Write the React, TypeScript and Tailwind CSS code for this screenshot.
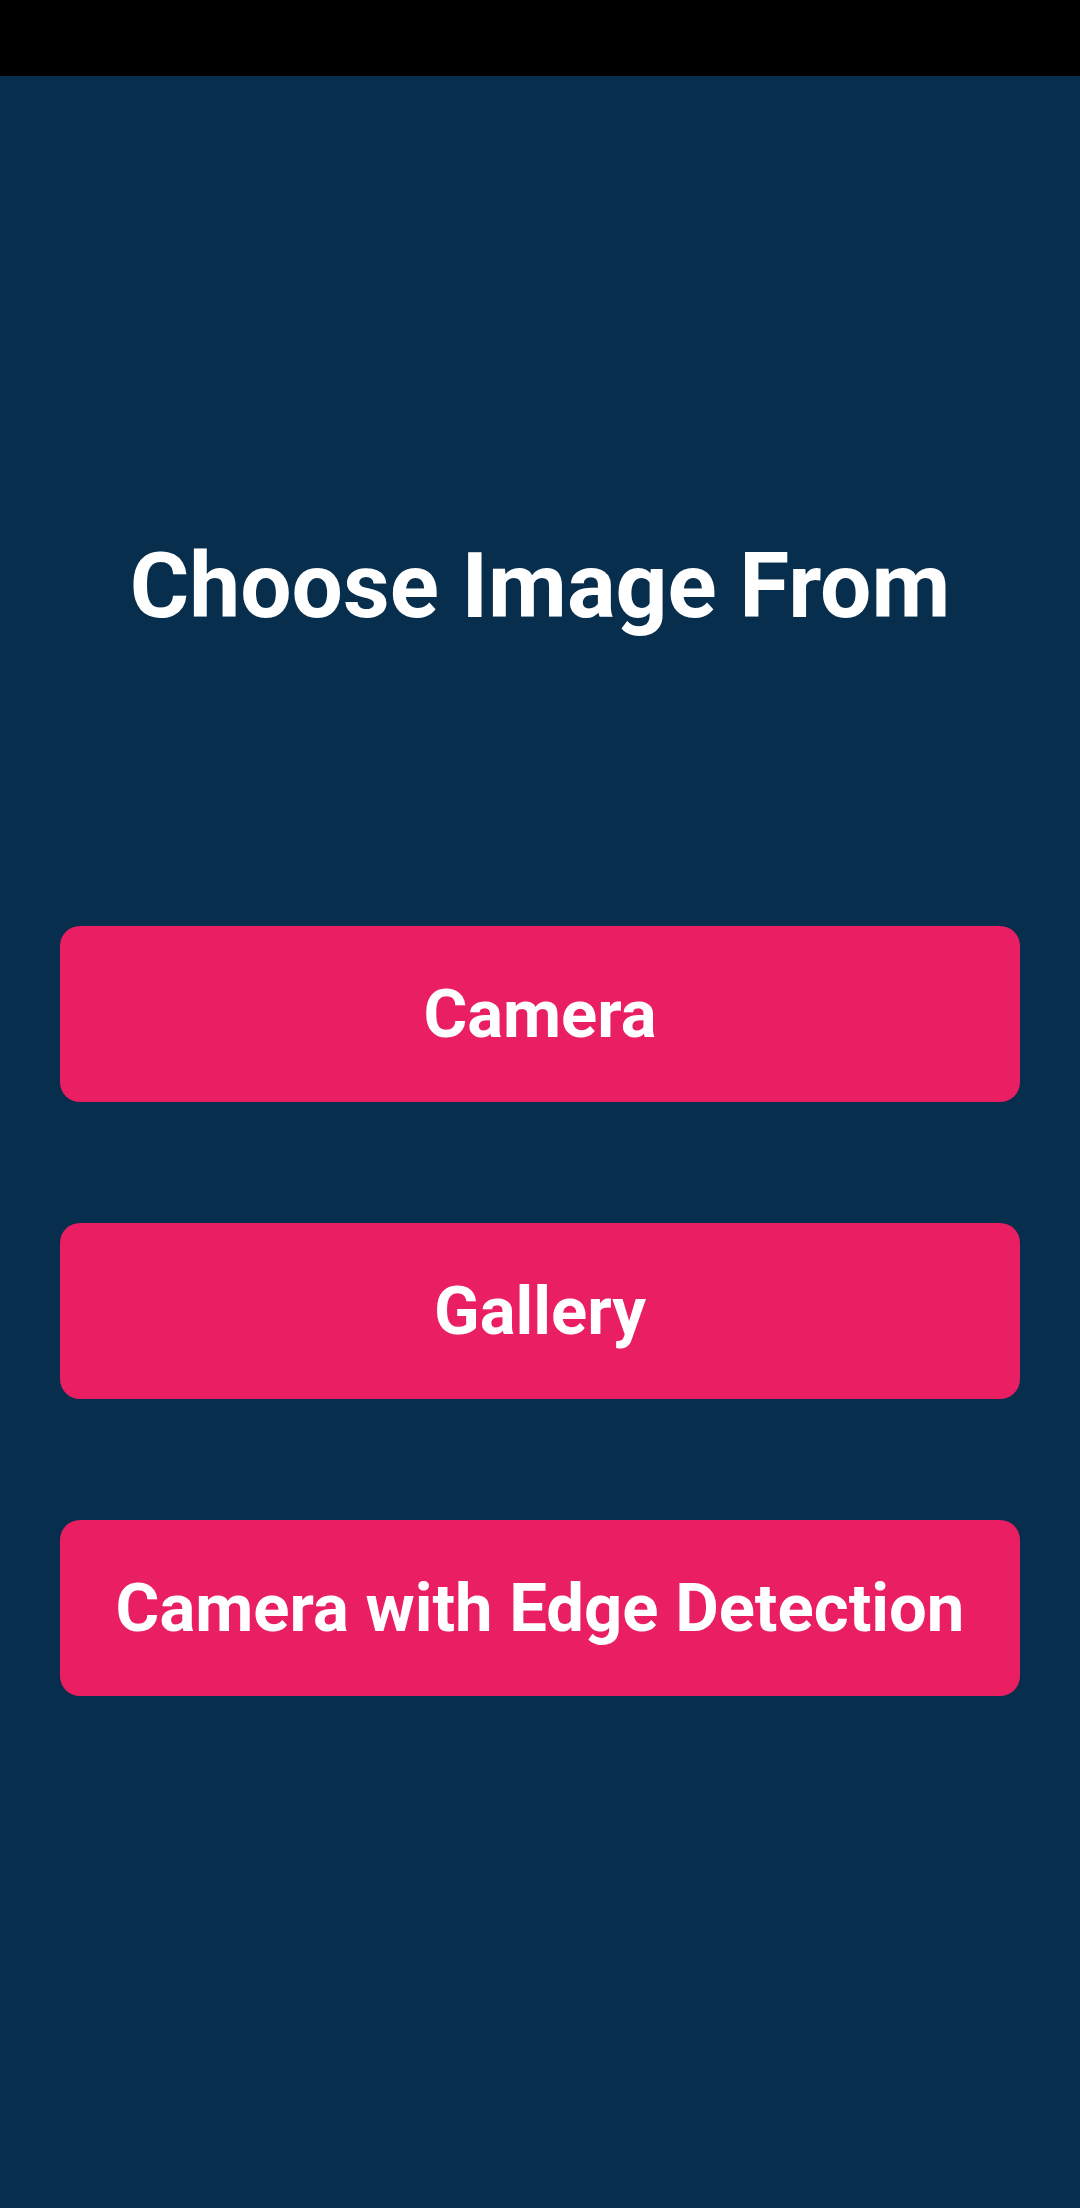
export default function App() {
  const buttons = ["Camera", "Gallery", "Camera with Edge Detection"];
  return (
    <div className="w-[1080px] h-[2208px] flex flex-col bg-[#082e4d]" style={{ fontFamily: "Roboto, sans-serif" }}>
      <div className="h-[76px] bg-black shrink-0" />
      <div className="flex flex-col items-center">
        <h1 className="mt-[460px] text-[91px] leading-[100px] font-bold text-white">Choose Image From</h1>
        <div className="mt-[290px] w-full px-[60px] flex flex-col gap-[121px]">
          {buttons.map((b) => (
            <button
              key={b}
              className="h-[176px] w-full rounded-[20px] bg-[#e91e63] text-white font-bold text-[67px] leading-none flex items-center justify-center"
            >
              {b}
            </button>
          ))}
        </div>
      </div>
    </div>
  );
}
